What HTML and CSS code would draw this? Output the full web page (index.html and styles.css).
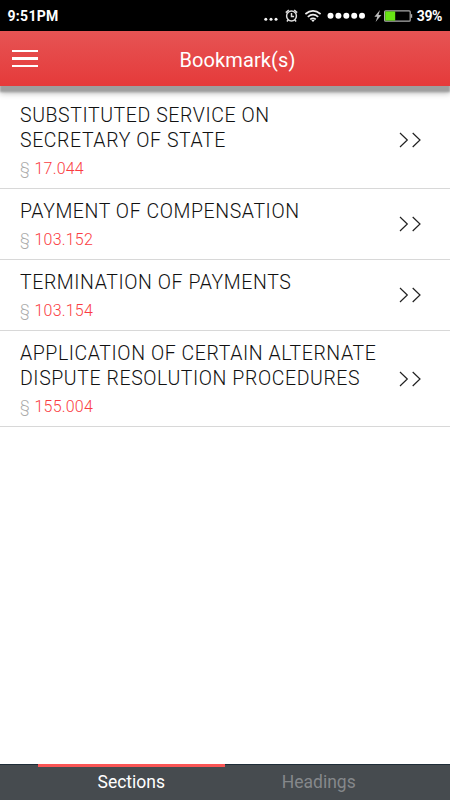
FILE: index.html
```html
<!DOCTYPE html>
<html lang="en">
<head>
  <meta charset="UTF-8">
  <title>Bookmark(s)</title>
  <link rel="stylesheet" href="styles.css">
</head>
<body>

  <div class="status">
    <span class="time">9:51PM</span>
    <svg class="status-icons" width="151" height="20" viewBox="0 0 151 20">
      <g fill="#f4f4f4">
        <circle cx="2.8" cy="13.2" r="1.5"/>
        <circle cx="8" cy="13.2" r="1.5"/>
        <circle cx="13" cy="13.2" r="1.5"/>
      </g>
      <!-- alarm -->
      <g fill="none" stroke="#ddd" stroke-width="1.5">
        <circle cx="28.5" cy="10" r="4.9"/>
        <path d="M28.5 7v3.4h2.6M22.8 6.6l3-2.6M34.2 6.6l-3-2.6M25.3 13.7l-1.4 1.7M31.7 13.7l1.4 1.7"/>
      </g>
      <!-- wifi -->
      <g fill="none" stroke="#eee" stroke-width="1.7">
        <path d="M42.4 8q7.6-6.2 15.2 0M44.8 10.8q5.2-4.2 10.4 0M47.2 13.4q2.8-2.2 5.6 0"/>
      </g>
      <path d="M48.3 14.2q1.7-1 3.4 0L50 16z" fill="#eee"/>
      <!-- signal -->
      <g fill="#fff">
        <circle cx="67.5" cy="9.8" r="3"/>
        <circle cx="75.4" cy="9.8" r="3"/>
        <circle cx="83.3" cy="9.8" r="3"/>
        <circle cx="91.2" cy="9.8" r="3"/>
        <circle cx="99" cy="9.8" r="3"/>
      </g>
      <!-- battery -->
      <path d="M117 4l-5.6 6.8h2.9L112.6 16l5.8-7h-2.9z" fill="#bbb"/>
      <rect x="121.6" y="4.8" width="25.6" height="10.4" rx="1" fill="none" stroke="#aaa" stroke-width="1.2"/>
      <rect x="122.2" y="5.4" width="10" height="9.2" fill="#68e414"/>
      <path d="M147.8 8.2h1.4v3.6h-1.4z" fill="#aaa"/>
    </svg>
    <span class="percent">39%</span>
  </div>

  <header class="header">
    <div class="menu">
      <span></span>
      <span></span>
      <span></span>
    </div>
    <h1 class="title">Bookmark(s)</h1>
  </header>

  <main class="list">
    <div class="item">
      <div class="item-text">
        <h2 class="name">SUBSTITUTED SERVICE ON<br>SECRETARY OF STATE</h2>
        <p class="number"><span class="sign">§</span> 17.044</p>
      </div>
      <svg class="arrows" width="24" height="16" viewBox="0 0 24 16"><path d="M1 1l7.3 7L1 15M13.7 1l7.3 7-7.3 7"/></svg>
    </div>
    <div class="item">
      <div class="item-text">
        <h2 class="name">PAYMENT OF COMPENSATION</h2>
        <p class="number"><span class="sign">§</span> 103.152</p>
      </div>
      <svg class="arrows" width="24" height="16" viewBox="0 0 24 16"><path d="M1 1l7.3 7L1 15M13.7 1l7.3 7-7.3 7"/></svg>
    </div>
    <div class="item">
      <div class="item-text">
        <h2 class="name">TERMINATION OF PAYMENTS</h2>
        <p class="number"><span class="sign">§</span> 103.154</p>
      </div>
      <svg class="arrows" width="24" height="16" viewBox="0 0 24 16"><path d="M1 1l7.3 7L1 15M13.7 1l7.3 7-7.3 7"/></svg>
    </div>
    <div class="item">
      <div class="item-text">
        <h2 class="name">APPLICATION OF CERTAIN ALTERNATE<br>DISPUTE RESOLUTION PROCEDURES</h2>
        <p class="number"><span class="sign">§</span> 155.004</p>
      </div>
      <svg class="arrows" width="24" height="16" viewBox="0 0 24 16"><path d="M1 1l7.3 7L1 15M13.7 1l7.3 7-7.3 7"/></svg>
    </div>
  </main>

  <nav class="tabs">
    <div class="tab active">Sections</div>
    <div class="tab">Headings</div>
  </nav>

</body>
</html>
```

FILE: styles.css
```css
* {
  box-sizing: border-box;
}

body {
  margin: 0;
  height: 100vh;
  display: flex;
  flex-direction: column;
  background: #fff;
  font-family: Roboto, sans-serif;
  overflow: hidden;
}

.status {
  display: flex;
  align-items: center;
  height: 31px;
  padding: 0 8px 0 7.5px;
  background: #000;
  color: #fff;
  font-size: 14px;
  font-weight: 700;
}

.time {
  padding-top: 1px;
  letter-spacing: 0.3px;
}

.status-icons {
  margin-left: auto;
  margin-right: 2.5px;
}

.percent {
  letter-spacing: -0.4px;
}

.header {
  display: flex;
  align-items: center;
  height: 55px;
  padding-left: 12px;
  background: linear-gradient(#e65454, #e53a3a);
  box-shadow: 0 6px 2px #9e9e9e, 0 7px 6px rgba(0, 0, 0, 0.3);
}

.menu {
  display: flex;
  flex-direction: column;
  gap: 4.7px;
  width: 26px;
}

.menu span {
  height: 2.8px;
  background: #fff;
}

.title {
  flex: 1;
  margin: 0;
  padding: 2px 13px 0 0;
  text-align: center;
  color: #fff;
  font-size: 20px;
  font-weight: 400;
  letter-spacing: 0.1px;
}

.list {
  flex: 1;
  padding-top: 6.5px;
}

.item {
  display: flex;
  align-items: center;
  justify-content: space-between;
  padding: 10.2px 27px 9px 20px;
  border-bottom: 1px solid #d8d8d8;
}

.name {
  margin: 0;
  color: #111;
  font-size: 19.5px;
  font-weight: 300;
  line-height: 25px;
  letter-spacing: 0.58px;
  white-space: nowrap;
}

.number {
  margin: 6px 0 0;
  color: #fa3c42;
  font-size: 16px;
  line-height: 20px;
  font-weight: 300;
  letter-spacing: 0.2px;
}

.sign {
  color: #aaa;
  margin-right: 0.5px;
}

.arrows {
  margin-bottom: 1.5px;
  fill: none;
  stroke: #222;
  stroke-width: 1.2;
}

.tabs {
  display: flex;
  height: 36px;
  padding: 0 37.5px;
  background: #464b4f;
  border-top: 1px solid #1f2d38;
}

.tab {
  flex: 1;
  text-align: center;
  color: #85888b;
  font-size: 17.5px;
  line-height: 34px;
}

.active {
  margin-top: -1px;
  border-top: 3px solid #fa5555;
  color: #fff;
  line-height: 31px;
}
```
